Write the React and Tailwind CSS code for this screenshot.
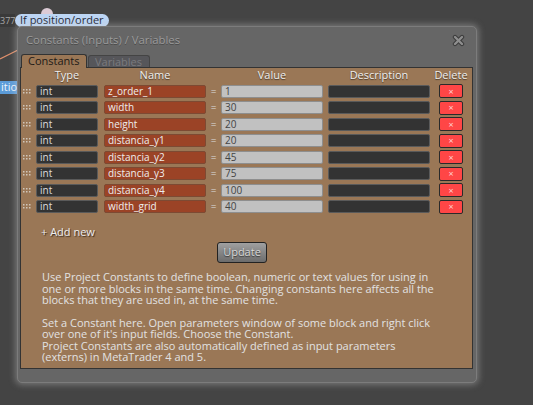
import React from "react";

const FONT = { fontFamily: '"Open Sans", "Noto Sans", sans-serif' };

const constants = [
  { name: "z_order_1", value: "1" },
  { name: "width", value: "30" },
  { name: "height", value: "20" },
  { name: "distancia_y1", value: "20" },
  { name: "distancia_y2", value: "45" },
  { name: "distancia_y3", value: "75" },
  { name: "distancia_y4", value: "100" },
  { name: "width_grid", value: "40" },
];

function CloseIcon() {
  return (
    <svg width="13" height="13" viewBox="0 0 13 13">
      <g strokeLinecap="round">
        <line x1="3" y1="3" x2="10" y2="10" stroke="#3c3c3c" strokeWidth="4.4" />
        <line x1="10" y1="3" x2="3" y2="10" stroke="#3c3c3c" strokeWidth="4.4" />
        <line x1="3" y1="3" x2="10" y2="10" stroke="#8e8e8e" strokeWidth="2.4" />
        <line x1="10" y1="3" x2="3" y2="10" stroke="#8e8e8e" strokeWidth="2.4" />
      </g>
    </svg>
  );
}

// drag grip: three columns of two dots
function Grip() {
  const dots = [];
  for (let c = 0; c < 3; c++) {
    for (let r = 0; r < 2; r++) {
      dots.push(<rect key={`${c}-${r}`} x={c * 3} y={r * 3} width="1.5" height="1.5" fill="#cfc6ba" />);
    }
  }
  return (
    <svg width="8" height="5" viewBox="0 0 8 5">
      {dots}
    </svg>
  );
}

function Row({ name, value }) {
  return (
    <div className="flex h-[16.5px] items-center">
      <div className="ml-[2px] flex w-[13px] items-center">
        <Grip />
      </div>
      <div className="flex h-[13px] w-[62px] items-center rounded-[2px] border border-[#5a5a5a] bg-[#333333] pl-[3px] text-[10px] text-[#dddddd]">
        int
      </div>
      <div className="ml-[6px] flex h-[13px] w-[102px] items-center rounded-[2px] border border-[#7d4a33] bg-[#9b4326] pl-[3px] text-[10px] text-[#eeeeee]">
        {name}
      </div>
      <div className="w-[15px] text-center text-[10px] text-[#dddddd]">=</div>
      <div className="flex h-[13px] w-[102px] items-center rounded-[2px] border border-[#8e8e8e] bg-[#c1c1c1] pl-[3px] text-[10px] text-[#444444]">
        {value}
      </div>
      <div className="ml-[5px] h-[13px] w-[102px] rounded-[2px] border border-[#5a5a5a] bg-[#333333]" />
      <div className="ml-[9px] flex h-[14px] w-[24px] items-center justify-center rounded-[2px] border border-[#2a2a2a] bg-[#ff4646] text-[9px] leading-none text-[#ffd0d0]">
        ×
      </div>
    </div>
  );
}

function HeadCell({ className, children }) {
  return <div className={`flex justify-center whitespace-nowrap ${className}`}>{children}</div>;
}

export default function App() {
  return (
    <div className="relative h-[405px] w-[533px] overflow-hidden bg-[#444444]" style={FONT}>
      {/* canvas items behind the dialog */}
      <svg className="absolute left-0 top-0" width="30" height="70">
        <line x1="0" y1="59" x2="20" y2="49" stroke="#e0906c" strokeWidth="1.2" />
      </svg>
      <div className="absolute left-0 top-[14px] flex h-[13px] w-[15px] items-center bg-[#3a3a3a] text-[9px] text-[#a8a8a8]">
        377
      </div>
      <div className="absolute left-[41px] top-[8px] h-[12px] w-[12px] rounded-full bg-[#dccbd6]" />
      <div className="absolute left-[15px] top-[14px] flex h-[13px] items-center rounded-full bg-[#bcd5f4] pl-[5px] pr-[5px] text-[11px] text-[#1e2633]">
        If position/order
      </div>
      <div className="absolute left-0 top-[81px] flex h-[13px] w-[20px] items-center bg-[#5b9bd8] pl-[1px] text-[11px] text-[#eef4fb]">
        ition
      </div>

      {/* dialog window */}
      <div className="absolute left-[17px] top-[26px] flex h-[357px] w-[460px] flex-col rounded-[5px] border border-[#7c7c7c] bg-[#666666] shadow-[0_0_6px_2px_rgba(210,210,210,0.35)]">
        <div className="flex h-[27px] items-center justify-between pl-[8px] pr-[11px]">
          <span className="text-[11.3px] text-[#9b9b9b] [text-shadow:0_1px_0_#4a4a4a]">
            Constants (Inputs) / Variables
          </span>
          <CloseIcon />
        </div>

        <div className="flex h-[14px] items-end pl-[3px]">
          <div className="relative z-10 flex h-[14px] w-[66px] items-center rounded-t-[3px] border border-b-0 border-[#333333] bg-[#9a7756] pl-[6px] text-[11px] text-[#1e1a16]">
            Constants
          </div>
          <div className="ml-px flex h-[13px] w-[62px] items-center rounded-t-[3px] border border-b-0 border-[#444444] bg-[#56565a] pl-[6px] text-[11px] text-[#7a7a7e]">
            Variables
          </div>
        </div>

        <div className="-mt-px ml-[2px] mr-[3px] flex h-[302px] flex-col border border-[#333333] bg-[#9a7756]">
          <div className="flex h-[15px] items-center text-[11px] text-[#eeeeee] [text-shadow:0_1px_1px_#4a3a2a]">
            <HeadCell className="ml-[15px] w-[62px]">Type</HeadCell>
            <HeadCell className="ml-[6px] w-[102px]">Name</HeadCell>
            <HeadCell className="ml-[15px] w-[102px]">Value</HeadCell>
            <HeadCell className="ml-[5px] w-[102px]">Description</HeadCell>
            <HeadCell className="ml-[9px] w-[24px]">Delete</HeadCell>
          </div>

          {constants.map((c) => (
            <Row key={c.name} name={c.name} value={c.value} />
          ))}

          <div className="mt-[8.5px] pl-[20px] text-[11px] leading-[15px] text-[#eeeeee] [text-shadow:1px_1px_1px_#3a2c20]">
            + Add new
          </div>

          <div className="mt-[3.5px] flex justify-center pr-[9px]">
            <div className="flex h-[21px] w-[50px] items-center justify-center rounded-[3px] border border-[#222222] bg-gradient-to-b from-[#a0a0a0] to-[#6c6c6c] text-[11px] text-[#d8d8d8] [text-shadow:0_1px_1px_#333333]">
              Update
            </div>
          </div>

          <p className="mt-[8.3px] pl-[21px] text-[11px] leading-[11.4px] text-[#e2e2e2]">
            Use Project Constants to define boolean, numeric or text values for using in
            <br />
            one or more blocks in the same time. Changing constants here affects all the
            <br />
            blocks that they are used in, at the same time.
            <br />
            <br />
            Set a Constant here. Open parameters window of some block and right click
            <br />
            over one of it's input fields. Choose the Constant.
            <br />
            Project Constants are also automatically defined as input parameters
            <br />
            (externs) in MetaTrader 4 and 5.
          </p>
        </div>
      </div>
    </div>
  );
}
